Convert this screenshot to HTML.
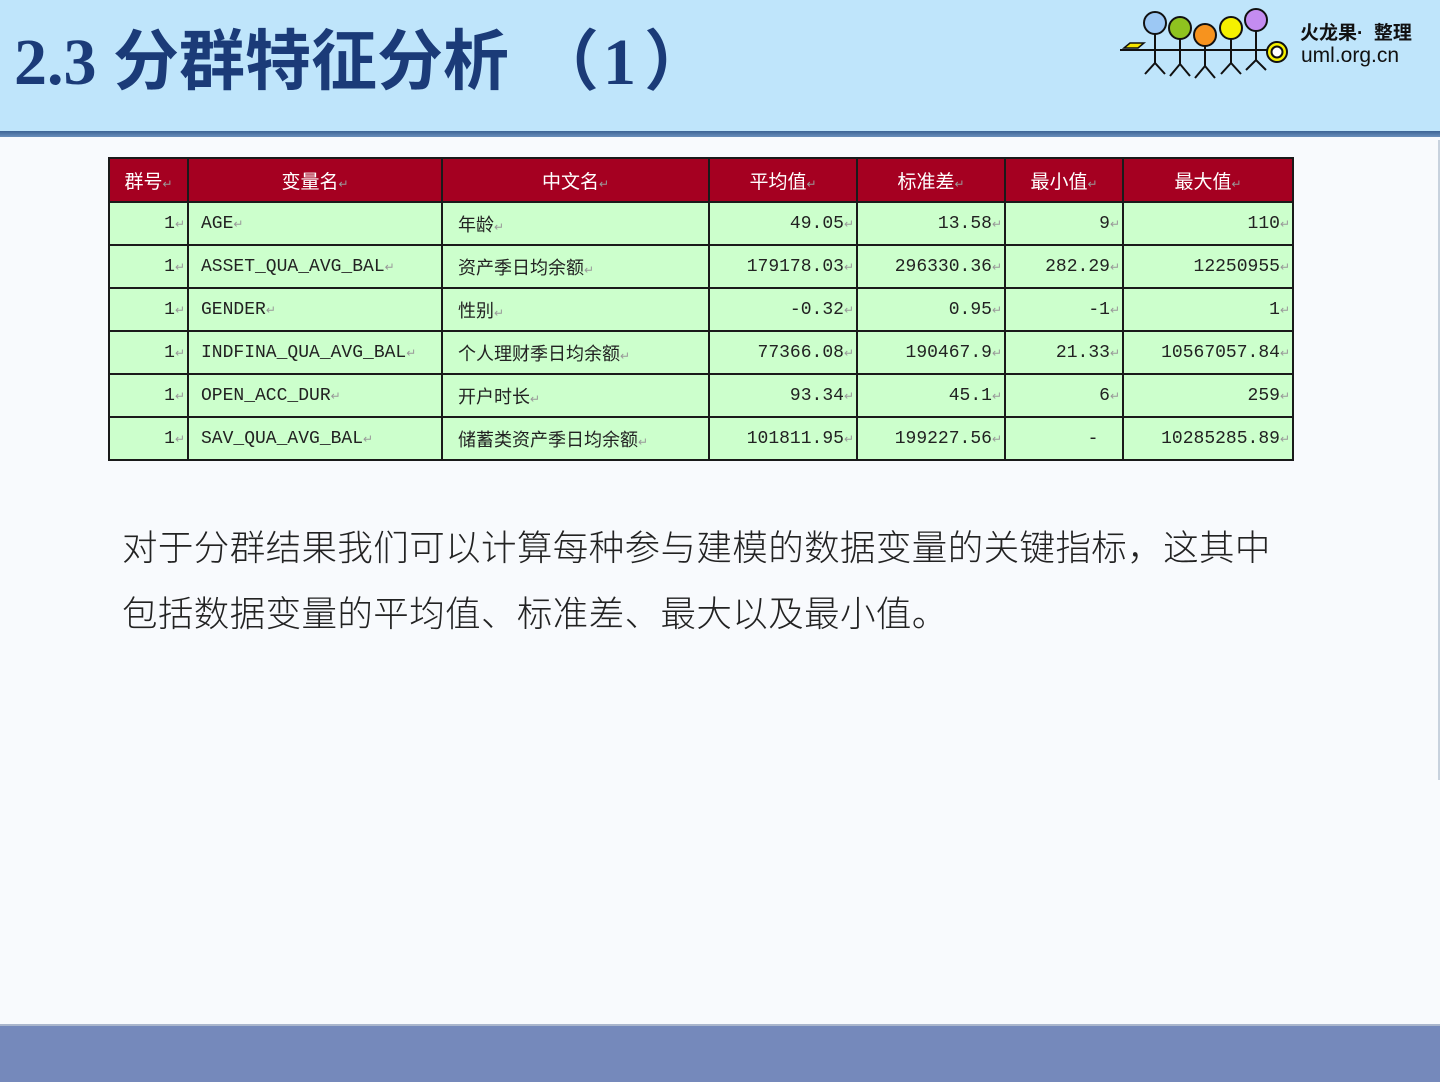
<!DOCTYPE html>
<html><head><meta charset="utf-8"><style>
body{margin:0;width:1440px;height:1080px;position:relative;background:#f8fafd;overflow:hidden;font-family:"Liberation Sans","Noto Sans CJK SC",sans-serif}
.hdr{position:absolute;left:0;top:0;width:1440px;height:131px;background:#bfe5fb}
.line{position:absolute;left:0;top:131px;width:1440px;height:6px;background:linear-gradient(#3d6496,#6a8fbb)}
.title{position:absolute;left:14px;top:8px;font-size:66px;font-weight:bold;color:#1b3b78;font-family:"Liberation Serif","Noto Sans CJK SC",serif;white-space:nowrap}
.title .c{font-family:"Liberation Sans","Noto Sans CJK SC",sans-serif}
.foot{position:absolute;left:0;top:1024px;width:1440px;height:56px;background:#7589bb;border-top:2px solid #aab6cc}
table{position:absolute;left:108px;top:157px;border-collapse:collapse;table-layout:fixed}
td{border:2px solid #1a1a1a;padding:0 4px 0 12px;font-size:18px;font-family:"Liberation Mono","Noto Sans CJK SC",monospace;color:#222;white-space:nowrap;overflow:hidden}
tr.h td{background:#a50021;color:#fff;height:42px;text-align:center;font-family:"Liberation Sans","Noto Sans CJK SC",sans-serif;font-size:19px;padding:0 4px}
tr.r td{background:#ccffcc;height:41px}
td.zh{padding-left:15px}
.n{text-align:right;padding:0 2px 0 4px}
.e{color:#999;font-size:12px}
.clip{position:absolute;left:100px;top:461px;width:1210px;height:12px;background:#f8fafd}
.txt{position:absolute;left:122px;top:513px;font-size:35.5px;line-height:66px;color:#222;font-family:"Noto Sans CJK SC","Liberation Sans",sans-serif;font-weight:300;white-space:nowrap;letter-spacing:0.4px}
.vr{position:absolute;left:1438px;top:140px;width:2px;height:640px;background:#c8d2de}
</style></head><body>
<div class="hdr"></div><div class="line"></div>
<div class="title">2.3 <span class="c">分群特征分析</span><span class="c" style="margin-left:24px">（</span><span style="margin-left:4px">1</span><span class="c" style="margin-left:8px">）</span></div>
<svg style="position:absolute;left:1110px;top:0" width="190" height="90" viewBox="1110 0 190 90" stroke="#111" stroke-width="2" fill="none">
<line x1="1120" y1="50" x2="1268" y2="50"/>
<polygon points="1124,48 1130,43 1144,43 1138,48" fill="#f5e600" stroke-width="1.5"/>
<g>
<line x1="1155" y1="34" x2="1155" y2="63"/><path d="M1145 74 L1155 63 L1165 74"/>
<line x1="1180" y1="39" x2="1180" y2="64"/><path d="M1170 76 L1180 64 L1190 76"/>
<line x1="1205" y1="46" x2="1205" y2="66"/><path d="M1195 78 L1205 66 L1215 78"/>
<line x1="1231" y1="39" x2="1231" y2="63"/><path d="M1221 74 L1231 63 L1241 74"/>
<line x1="1256" y1="31" x2="1256" y2="60"/><path d="M1246 70 L1256 60 L1266 70"/>
</g>
<circle cx="1155" cy="23" r="11" fill="#9cc8f4"/>
<circle cx="1180" cy="28" r="11" fill="#8fc31f"/>
<circle cx="1205" cy="35" r="11" fill="#f7931e"/>
<circle cx="1231" cy="28" r="11" fill="#f5f000"/>
<circle cx="1256" cy="20" r="11" fill="#c48cf0"/>
<circle cx="1277" cy="52" r="10" fill="#f5f000"/>
<circle cx="1277" cy="52" r="5.5" fill="#fff"/>
</svg>
<div style="position:absolute;left:1300px;top:18px;font-size:19px;font-weight:bold;color:#111;white-space:nowrap">火龙果· &nbsp;整理</div>
<div style="position:absolute;left:1301px;top:44px;font-size:21px;color:#111">uml.org.cn</div>
<table>
<colgroup><col style="width:79px"><col style="width:254px"><col style="width:267px"><col style="width:148px"><col style="width:148px"><col style="width:118px"><col style="width:170px"></colgroup>
<tr class="h"><td>群号<span class="e">↵</span></td><td>变量名<span class="e">↵</span></td><td>中文名<span class="e">↵</span></td><td>平均值<span class="e">↵</span></td><td>标准差<span class="e">↵</span></td><td>最小值<span class="e">↵</span></td><td>最大值<span class="e">↵</span></td></tr>
<tr class="r"><td class="n">1<span class="e">↵</span></td><td>AGE<span class="e">↵</span></td><td class="zh">年龄<span class="e">↵</span></td><td class="n">49.05<span class="e">↵</span></td><td class="n">13.58<span class="e">↵</span></td><td class="n">9<span class="e">↵</span></td><td class="n">110<span class="e">↵</span></td></tr>
<tr class="r"><td class="n">1<span class="e">↵</span></td><td>ASSET_QUA_AVG_BAL<span class="e">↵</span></td><td class="zh">资产季日均余额<span class="e">↵</span></td><td class="n">179178.03<span class="e">↵</span></td><td class="n">296330.36<span class="e">↵</span></td><td class="n">282.29<span class="e">↵</span></td><td class="n">12250955<span class="e">↵</span></td></tr>
<tr class="r"><td class="n">1<span class="e">↵</span></td><td>GENDER<span class="e">↵</span></td><td class="zh">性别<span class="e">↵</span></td><td class="n">-0.32<span class="e">↵</span></td><td class="n">0.95<span class="e">↵</span></td><td class="n">-1<span class="e">↵</span></td><td class="n">1<span class="e">↵</span></td></tr>
<tr class="r"><td class="n">1<span class="e">↵</span></td><td>INDFINA_QUA_AVG_BAL<span class="e">↵</span></td><td class="zh">个人理财季日均余额<span class="e">↵</span></td><td class="n">77366.08<span class="e">↵</span></td><td class="n">190467.9<span class="e">↵</span></td><td class="n">21.33<span class="e">↵</span></td><td class="n">10567057.84<span class="e">↵</span></td></tr>
<tr class="r"><td class="n">1<span class="e">↵</span></td><td>OPEN_ACC_DUR<span class="e">↵</span></td><td class="zh">开户时长<span class="e">↵</span></td><td class="n">93.34<span class="e">↵</span></td><td class="n">45.1<span class="e">↵</span></td><td class="n">6<span class="e">↵</span></td><td class="n">259<span class="e">↵</span></td></tr>
<tr class="r"><td class="n">1<span class="e">↵</span></td><td>SAV_QUA_AVG_BAL<span class="e">↵</span></td><td class="zh">储蓄类资产季日均余额<span class="e">↵</span></td><td class="n">101811.95<span class="e">↵</span></td><td class="n">199227.56<span class="e">↵</span></td><td class="n">-&nbsp;&nbsp;</td><td class="n">10285285.89<span class="e">↵</span></td></tr>
</table>
<div class="clip"></div>
<div class="txt">对于分群结果我们可以计算每种参与建模的数据变量的关键指标，这其中<br>包括数据变量的平均值、标准差、最大以及最小值。</div>
<div class="vr"></div>
<div class="foot"></div>
</body></html>
